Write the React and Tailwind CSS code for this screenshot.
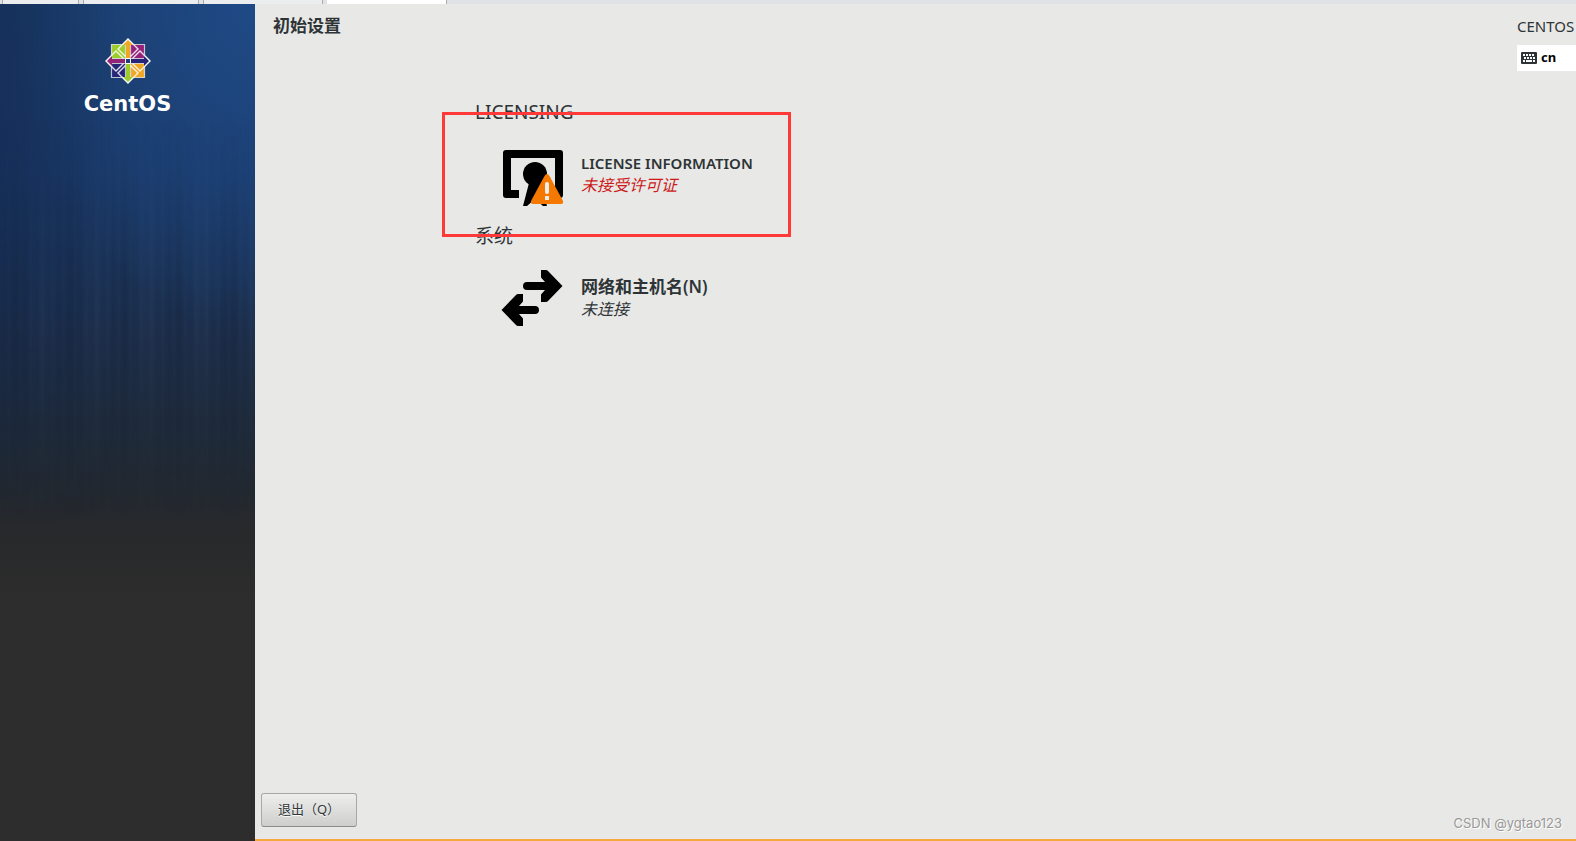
import React from 'react';

const tabs = [
  { width: 'w-[77px]', active: false },
  { width: 'w-[116px]', active: false },
  { width: 'w-[120px]', active: false },
  { width: 'w-[120px]', active: true },
];

function TabStrip() {
  return (
    <div className="flex h-1 shrink-0 gap-1 bg-[#dfe3e6] pl-[2px]">
      {tabs.map((tab, i) => (
        <div
          key={i}
          className={`${tab.width} border-r border-[#a9abad] ${tab.active ? 'bg-white' : 'border-l bg-[#ebedee]'}`}
        ></div>
      ))}
    </div>
  );
}

function CentosMark() {
  return (
    <svg viewBox="-23 -23 46 46" className="relative h-[46px] w-[46px]" aria-hidden="true">
      {/* Corner squares */}
      <g stroke="#fff" strokeOpacity="0.7" strokeWidth="1.2">
        <path fill="#9ccd2a" d="M-16.500-16.500h14v14h-14z" />
        <path fill="#932279" d="M2.500-16.500h14v14h-14z" />
        <path fill="#262577" d="M-16.500 2.500h14v14h-14z" />
        <path fill="#efa724" d="M2.500 2.500h14v14h-14z" />
      </g>
      {/* Arrows */}
      <path fill="#efa724" d="M0-22l5.500 6H2v13h-4v-13h-3.500z" />
      <path fill="#262577" d="M22 0l-6 5.500V2H3v-4h13v-3.500z" />
      <path fill="#9ccd2a" d="M0 22l5.500-6H2V3h-4v13h-3.500z" />
      <path fill="#932279" d="M-22 0l6 5.500V2h13v-4h-13v-3.500z" />
      {/* Rotated diamonds */}
      <g fill="none" stroke="#fff" strokeWidth="1.4" strokeOpacity="0.85">
        <path d="M-5.500-16.500L-10-12l7.500 7.500M5.500-16.500L10-12l-7.500 7.500M-5.500 16.500L-10 12l7.500-7.500M5.500 16.500L10 12l-7.500-7.500" />
        <path d="M-16.500-5.500L-12-10l7.500 7.500M-16.500 5.500L-12 10l7.500-7.500M16.500-5.500L12-10l-7.500 7.500M16.500 5.500L12 10l-7.500-7.500" />
      </g>
      <path
        fill="none"
        stroke="#fff"
        strokeWidth="1.4"
        d="M-5.500-16.500L0-22l5.500 5.500M16.500-5.500L22 0l-5.500 5.500M5.500 16.500L0 22l-5.500-5.500M-16.500 5.500L-22 0l5.500-5.500"
      />
      <path fill="#1e3f75" stroke="#fff" strokeWidth="1" d="M-2.500-2.500h5v5h-5z" />
    </svg>
  );
}

function Sidebar() {
  return (
    <aside className="relative flex w-[255px] shrink-0 flex-col items-center bg-[#2d2d2d] bg-[radial-gradient(ellipse_at_top_right,#1f4a86_0%,#1d427b00_68%),linear-gradient(180deg,#1a3a68_0px,#1a3866_170px,#1b3357_270px,#1d2e4a_340px,#1e2b3d_410px,#212933_470px,#28292b_530px,#2d2d2d_600px)] bg-[length:100%_340px,100%_100%] bg-no-repeat pt-[34px]">
      {/* Faint vertical streaks and the darker left edge */}
      <div className="absolute inset-x-0 top-28 h-[400px] bg-[repeating-linear-gradient(90deg,#0000_0px,#0a142412_4px,#0000_7px,#ffffff04_9px,#0000_11px),repeating-linear-gradient(90deg,#0000_0px,#0a142422_19px,#0000_31px,#ffffff04_43px,#0000_53px)] mask-[linear-gradient(180deg,transparent,black_50%,transparent)]"></div>
      <div className="absolute inset-x-0 top-0 h-[520px] bg-[linear-gradient(90deg,#0f204055,#0f204000_45%)] mask-[linear-gradient(180deg,black_40%,transparent)]"></div>

      <CentosMark />
      <p className="relative mt-2 font-['DejaVu_Sans',sans-serif] text-[21px] leading-6 font-bold text-white">CentOS</p>
    </aside>
  );
}

function LicenseIcon() {
  return (
    <svg viewBox="0 0 64 64" className="h-16 w-16 shrink-0" aria-hidden="true">
      <path d="M5 8h54q3 0 3 3v42q0 3-3 3h-9v-8h4V16H10v32h8v8H5q-3 0-3-3V11q0-3 3-3z" />
      <circle cx="34" cy="32" r="12" />
      <path d="M28 41L22 64h4l8-7 8 7h4l-6-23z" />
      <path fill="#f57900" d="M43.500 34q2.500-4 5 0l13 24q2 4-2 4h-27q-4 0-2-4z" />
      <path stroke="#eeeeec" strokeWidth="4" strokeLinecap="round" d="M46 42v8" />
      <rect x="44" y="54" width="4" height="4" rx="0.500" fill="#eeeeec" />
    </svg>
  );
}

function NetworkIcon() {
  return (
    <svg viewBox="0 0 64 64" className="h-16 w-16 shrink-0" aria-hidden="true">
      <path d="M40 4h5q1 0 2 1l14.500 15L47 35q-1 1-2 1h-5v-7.500l4-4.500H26a4 4 0 0 1 0-8h18l-4-4.500z" />
      <path d="M22 28h-5q-1 0-2 1L.5 44 15 59q1 1 2 1h5v-7.500L18 48h16a4 4 0 0 0 0-8H18l4-4.500z" />
    </svg>
  );
}

function KeyboardIcon() {
  return (
    <svg viewBox="0 0 16 12" className="h-3 w-4 shrink-0" aria-hidden="true">
      <rect width="16" height="12" rx="1" fill="#2e3436" />
      <path
        stroke="#fff"
        strokeWidth="2"
        d="M2 3h2M5 3h2M8 3h2M11 3h2M3 6h2M6 6h2M9 6h2M12 6h2M2 9h2M5 9h6M12 9h2"
      />
    </svg>
  );
}

function Spoke({ icon, title, titleSize, status, statusColor }) {
  return (
    <button className="flex items-center gap-4 text-left">
      {icon}
      <span className="flex flex-col">
        <span className={`leading-[22px] font-semibold ${titleSize}`}>{title}</span>
        <span className={`text-base leading-[22px] italic ${statusColor}`}>{status}</span>
      </span>
    </button>
  );
}

function App() {
  return (
    <div className="flex min-h-screen flex-col overflow-hidden bg-[#e8e8e6] font-['Noto_Sans','Noto_Sans_CJK_SC',sans-serif] text-[#2e3436]">
      <TabStrip />

      <div className="flex grow">
        <Sidebar />

        <main className="relative flex min-w-0 grow flex-col border-b-2 border-[#f5a93c]">
          {/* Header */}
          <header className="flex h-24 items-start justify-between pt-[10px] pl-[18px]">
            <h1 className="text-[17px] leading-6 font-bold">初始设置</h1>
            <div className="w-[59px]">
              <p className="text-[15px] leading-6 whitespace-nowrap">CENTOS</p>
              <button className="mt-[7px] flex h-[26px] w-full items-center gap-1 bg-white pl-1 text-[13px] font-bold text-black">
                <KeyboardIcon />
                cn
              </button>
            </div>
          </header>

          {/* Spokes */}
          <div className="flex grow flex-col gap-[18px] pl-[220px]">
            <section className="relative">
              <h2 className="text-[19px] leading-6">LICENSING</h2>
              <div className="mt-[18px] pl-[26px]">
                <Spoke
                  icon={<LicenseIcon />}
                  title="LICENSE INFORMATION"
                  titleSize="text-[15px]"
                  status="未接受许可证"
                  statusColor="text-[#cc1a1a]"
                />
              </div>
              {/* Highlight frame */}
              <div className="pointer-events-none absolute top-3 -left-[33px] h-[125px] w-[349px] border-3 border-[#ff3838]"></div>
            </section>

            <section>
              <h2 className="text-[19px] leading-6">系统</h2>
              <div className="mt-[18px] pl-[26px]">
                <Spoke
                  icon={<NetworkIcon />}
                  title="网络和主机名(N)"
                  titleSize="text-[17px]"
                  status="未连接"
                  statusColor=""
                />
              </div>
            </section>
          </div>

          {/* Footer */}
          <footer className="flex items-end justify-between pr-[14px] pb-3 pl-[6px]">
            <button className="h-[34px] w-24 rounded-[3px] border border-[#a8a8a6] border-b-[#8c8c8a] bg-linear-to-b from-[#eeeeed] to-[#cececc] text-[13px] text-shadow-[0_1px_0_#ffffff]">
              退出（Q）
            </button>
            <p className="-mb-2 font-[Inter,sans-serif] text-[13px] leading-6 text-[#999999] text-shadow-[1px_1px_0_#ffffff]">
              CSDN @ygtao123
            </p>
          </footer>
        </main>
      </div>
    </div>
  );
}

export default App;
